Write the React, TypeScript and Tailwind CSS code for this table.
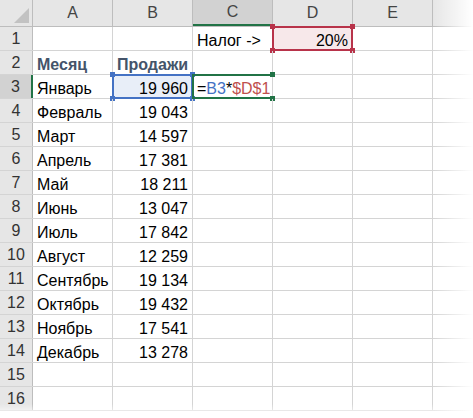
import React from 'react';

const months = [
  ['Январь', '19 960'],
  ['Февраль', '19 043'],
  ['Март', '14 597'],
  ['Апрель', '17 381'],
  ['Май', '18 211'],
  ['Июнь', '13 047'],
  ['Июль', '17 842'],
  ['Август', '12 259'],
  ['Сентябрь', '19 134'],
  ['Октябрь', '19 432'],
  ['Ноябрь', '17 541'],
  ['Декабрь', '13 278'],
];

const cols = ['A', 'B', 'C', 'D', 'E'];

function Handle({ pos, color }: { pos: string; color: string }) {
  return <span className={`absolute w-[5px] h-[5px] ${pos} ${color}`} />;
}

function Cell({ children, className = '' }: { children?: React.ReactNode; className?: string }) {
  return (
    <div className={`relative w-[80px] h-full shrink-0 border-r border-[#d4d4d4] flex items-end px-[4px] pb-[1px] ${className}`}>
      {children}
    </div>
  );
}

function RowHead({ n, active }: { n: number; active?: boolean }) {
  return (
    <div
      className={`w-[33px] h-full shrink-0 flex items-center justify-center text-[16px] text-[#333] ${
        active ? 'bg-[#d2d2d2] border-r-2 border-[#217346]' : 'bg-[#e6e6e6] border-r border-[#bdbdbd]'
      }`}
    >
      {n}
    </div>
  );
}

export default function App() {
  const rows: React.ReactNode[] = [];

  // row 1
  rows.push(
    <div key={1} className="flex h-[24px] border-b border-[#d4d4d4]">
      <RowHead n={1} />
      <Cell />
      <Cell />
      <Cell>Налог -&gt;</Cell>
      <Cell className="justify-end bg-[#f7e8ea]">
        20%
        <span className="absolute -left-px -top-px w-[81px] h-[25px] border-2 border-[#b8334a]" />
        <Handle pos="-left-[3px] -top-[3px]" color="bg-[#b8334a]" />
        <Handle pos="-right-[3px] -top-[3px]" color="bg-[#b8334a]" />
        <Handle pos="-left-[3px] -bottom-[3px]" color="bg-[#b8334a]" />
        <Handle pos="-right-[3px] -bottom-[3px]" color="bg-[#b8334a]" />
      </Cell>
      <Cell />
      <div className="flex-1" />
    </div>
  );

  // row 2 headings
  rows.push(
    <div key={2} className="flex h-[24px] border-b border-[#d4d4d4]">
      <RowHead n={2} />
      <Cell className="font-bold text-[#44546a]">Месяц</Cell>
      <Cell className="font-bold text-[#44546a]">Продажи</Cell>
      <Cell />
      <Cell />
      <Cell />
      <div className="flex-1" />
    </div>
  );

  months.forEach(([m, v], i) => {
    const n = i + 3;
    const first = n === 3;
    rows.push(
      <div key={n} className="flex h-[24px] border-b border-[#d4d4d4]">
        <RowHead n={n} active={first} />
        <Cell>{m}</Cell>
        <Cell className={`justify-end ${first ? 'bg-[#e8eef8]' : ''}`}>
          {v}
          {first && (
            <>
              <span className="absolute -left-px -top-px w-[81px] h-[25px] border-2 border-[#4472c4]" />
              <Handle pos="-left-[3px] -top-[3px]" color="bg-[#4472c4]" />
              <Handle pos="-right-[3px] -top-[3px]" color="bg-[#4472c4]" />
              <Handle pos="-left-[3px] -bottom-[3px]" color="bg-[#4472c4]" />
              <Handle pos="-right-[3px] -bottom-[3px]" color="bg-[#4472c4]" />
            </>
          )}
        </Cell>
        <Cell>
          {first && (
            <>
              <span>=</span>
              <span className="text-[#4472c4]">B3</span>
              <span>*</span>
              <span className="text-[#c0504d]">$D$1</span>
              <span className="absolute -left-px -top-px w-[81px] h-[25px] border-y-2 border-l-2 border-[#217346]" />
              <Handle pos="-right-[3px] -top-[3px]" color="bg-[#217346]" />
              <Handle pos="-right-[3px] -bottom-[3px]" color="bg-[#217346]" />
            </>
          )}
        </Cell>
        <Cell />
        <Cell />
        <div className="flex-1" />
      </div>
    );
  });

  [15, 16].forEach((n) => {
    rows.push(
      <div key={n} className="flex h-[24px] border-b border-[#d4d4d4]">
        <RowHead n={n} />
        <Cell />
        <Cell />
        <Cell />
        <Cell />
        <Cell />
        <div className="flex-1" />
      </div>
    );
  });

  return (
    <div
      className="relative w-[473px] h-[418px] overflow-hidden bg-white text-[16px] text-black leading-none"
      style={{ fontFamily: '"Liberation Sans", Arial, sans-serif' }}
    >
      {/* column headers */}
      <div className="flex h-[27px] bg-[#e6e6e6] border-b border-[#bdbdbd]">
        <div className="relative w-[33px] shrink-0 border-r border-[#bdbdbd]">
          <svg className="absolute right-[3px] bottom-[3px]" width="15" height="15" viewBox="0 0 15 15">
            <polygon points="15,0 15,15 0,15" fill="#c2c2c2" />
          </svg>
        </div>
        {cols.map((c) => (
          <div
            key={c}
            className={`w-[80px] shrink-0 flex items-center justify-center text-[16px] text-[#444] border-r border-[#bdbdbd] ${
              c === 'C' ? 'bg-[#d2d2d2] border-b-2 border-b-[#217346]' : ''
            }`}
          >
            {c}
          </div>
        ))}
        <div className="flex-1" />
      </div>
      {rows}
      {/* soft edge fade */}
      <div className="pointer-events-none absolute right-0 top-0 h-full w-[40px] bg-gradient-to-r from-transparent to-white" />
      <div className="pointer-events-none absolute left-0 bottom-0 w-full h-[14px] bg-gradient-to-b from-transparent to-white" />
    </div>
  );
}
